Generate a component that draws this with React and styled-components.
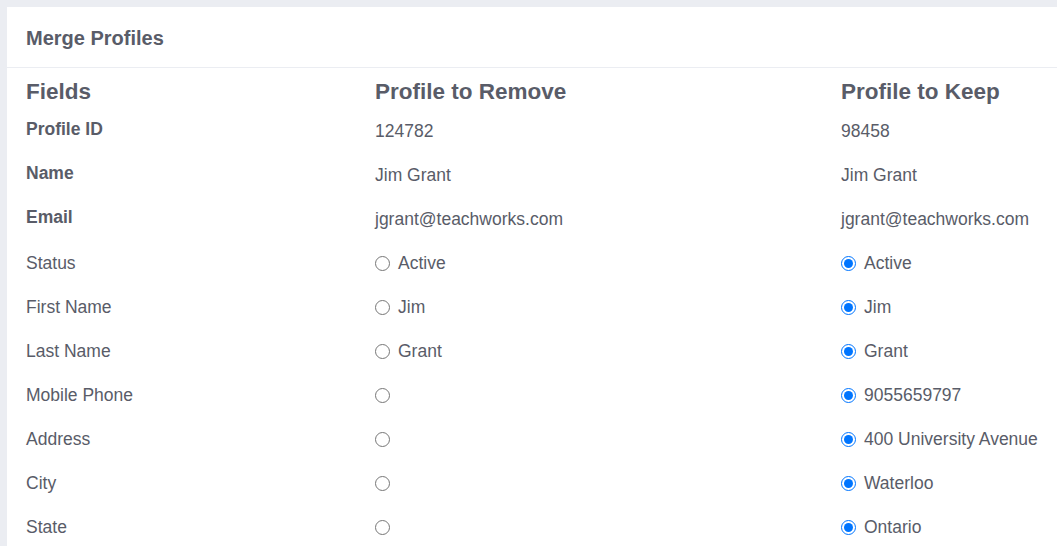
import React from "react"
import styled, { createGlobalStyle } from "styled-components"

const GlobalStyle = createGlobalStyle`
  html, body {
    margin: 0;
    padding: 0;
    background: #ebedf2;
    overflow: hidden;
    font-family: "Liberation Sans", Arial, sans-serif;
  }
`

const Page = styled.div`
  padding: 7px 0 0 7px;
  width: 1120px;
`

const Card = styled.div`
  background: #ffffff;
  color: #595c68;
  min-height: 560px;
`

const CardHeader = styled.div`
  height: 60px;
  padding: 0 19px;
  display: flex;
  align-items: center;
  border-bottom: 1px solid #ebedf2;
`

const Title = styled.h3`
  margin: 0;
  padding-top: 2px;
  font-size: 20px;
  font-weight: 700;
`

const CardBody = styled.div`
  padding: 6px 19px 0;
`

const Row = styled.div`
  display: grid;
  grid-template-columns: 349px 466px 1fr;
  align-items: center;
  height: ${(p) => (p.$head ? "35px" : "44px")};
`

const Heading = styled.div`
  font-size: 22.5px;
  font-weight: 700;
  padding-top: 1px;
`

const Label = styled.div`
  font-size: 17.5px;
  font-weight: ${(p) => (p.$bold ? 700 : 400)};
  padding-bottom: ${(p) => (p.$bold ? "3px" : "0")};
`

const Value = styled.div`
  font-size: 17.5px;
  padding-top: 1px;
`

const Choice = styled.label`
  display: flex;
  align-items: center;
  gap: 8px;
  font-size: 17.5px;
`

const Radio = styled.input`
  width: 15px;
  height: 15px;
  margin: 0;
  flex: none;
`

const fixed = [
  { label: "Profile ID", remove: "124782", keep: "98458" },
  { label: "Name", remove: "Jim Grant", keep: "Jim Grant" },
  { label: "Email", remove: "jgrant@teachworks.com", keep: "jgrant@teachworks.com" },
]

const choices = [
  { label: "Status", remove: "Active", keep: "Active" },
  { label: "First Name", remove: "Jim", keep: "Jim" },
  { label: "Last Name", remove: "Grant", keep: "Grant" },
  { label: "Mobile Phone", remove: "", keep: "9055659797" },
  { label: "Address", remove: "", keep: "400 University Avenue" },
  { label: "City", remove: "", keep: "Waterloo" },
  { label: "State", remove: "", keep: "Ontario" },
]

const App = () => {
  return (
    <Page>
      <GlobalStyle />
      <Card>
        <CardHeader>
          <Title>Merge Profiles</Title>
        </CardHeader>
        <CardBody>
          <Row $head>
            <Heading>Fields</Heading>
            <Heading>Profile to Remove</Heading>
            <Heading>Profile to Keep</Heading>
          </Row>
          {fixed.map((f) => (
            <Row key={f.label}>
              <Label $bold>{f.label}</Label>
              <Value>{f.remove}</Value>
              <Value>{f.keep}</Value>
            </Row>
          ))}
          {choices.map((c) => (
            <Row key={c.label}>
              <Label>{c.label}</Label>
              <Choice>
                <Radio type="radio" name={c.label} />
                {c.remove}
              </Choice>
              <Choice>
                <Radio type="radio" name={c.label} defaultChecked />
                {c.keep}
              </Choice>
            </Row>
          ))}
        </CardBody>
      </Card>
    </Page>
  )
}

export default App
